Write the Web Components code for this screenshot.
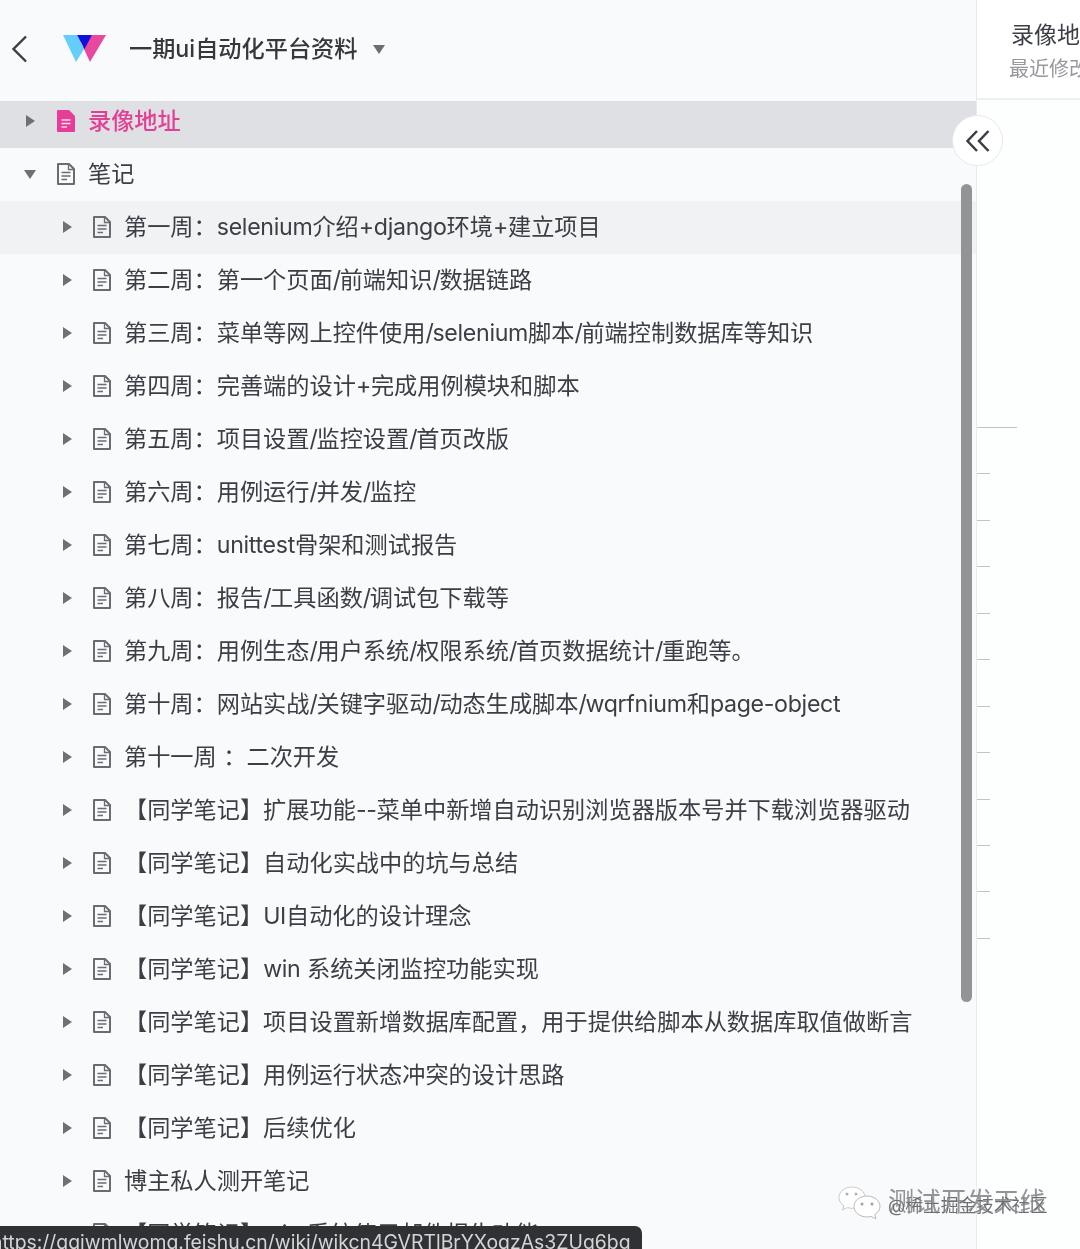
<!DOCTYPE html>
<html lang="zh-CN"><head><meta charset="utf-8"><title>一期ui自动化平台资料</title>
<style>
html,body{margin:0;padding:0;height:1249px;overflow:hidden;background:#fdfefe}
body{font-family:Inter,"Noto Sans CJK SC","Liberation Sans",sans-serif;color:#3b3e44}
</style></head><body>
<wiki-app>
  <wiki-sidebar slot="side">
    <wiki-header>一期ui自动化平台资料</wiki-header>
    <tree-row level="1" state="active" arrow="right">录像地址</tree-row>
    <tree-row level="1" arrow="down">笔记</tree-row>
    <tree-row level="2" state="hover">第一周：selenium介绍+django环境+建立项目</tree-row>
    <tree-row level="2">第二周：第一个页面/前端知识/数据链路</tree-row>
    <tree-row level="2">第三周：菜单等网上控件使用/selenium脚本/前端控制数据库等知识</tree-row>
    <tree-row level="2">第四周：完善端的设计+完成用例模块和脚本</tree-row>
    <tree-row level="2">第五周：项目设置/监控设置/首页改版</tree-row>
    <tree-row level="2">第六周：用例运行/并发/监控</tree-row>
    <tree-row level="2">第七周：unittest骨架和测试报告</tree-row>
    <tree-row level="2">第八周：报告/工具函数/调试包下载等</tree-row>
    <tree-row level="2">第九周：用例生态/用户系统/权限系统/首页数据统计/重跑等。</tree-row>
    <tree-row level="2">第十周：网站实战/关键字驱动/动态生成脚本/wqrfnium和page-object</tree-row>
    <tree-row level="2">第十一周 ：二次开发</tree-row>
    <tree-row level="2">【同学笔记】扩展功能--菜单中新增自动识别浏览器版本号并下载浏览器驱动</tree-row>
    <tree-row level="2">【同学笔记】自动化实战中的坑与总结</tree-row>
    <tree-row level="2">【同学笔记】UI自动化的设计理念</tree-row>
    <tree-row level="2">【同学笔记】win 系统关闭监控功能实现</tree-row>
    <tree-row level="2">【同学笔记】项目设置新增数据库配置，用于提供给脚本从数据库取值做断言</tree-row>
    <tree-row level="2">【同学笔记】用例运行状态冲突的设计思路</tree-row>
    <tree-row level="2">【同学笔记】后续优化</tree-row>
    <tree-row level="2">博主私人测开笔记</tree-row>
    <tree-row level="2">【同学笔记】win 系统使用邮件报告功能</tree-row>
  </wiki-sidebar>
  <wiki-aside slot="main"></wiki-aside>
</wiki-app>
<status-tip>https://qqiwmlwomq.feishu.cn/wiki/wikcn4GVRTlBrYXoqzAs3ZUg6bg</status-tip>
<wx-mark></wx-mark>
<toggle-knob></toggle-knob>
<script>
function def(name, css, html, init){
  customElements.define(name, class extends HTMLElement{
    constructor(){super();const s=this.attachShadow({mode:'open'});s.innerHTML='<style>'+css+'</style>'+(typeof html==='function'?html(this):html);if(init)init(this);}
  });
}
def('wiki-app',`:host{display:flex;width:1080px;height:1249px;overflow:hidden;position:relative;filter:blur(.3px)}`,`<slot name="side"></slot><slot name="main"></slot>`);
def('wiki-sidebar',`:host{display:block;box-sizing:border-box;width:977px;flex:none;height:1249px;background:#f9fafc;border-right:1px solid #e9eaec;position:relative;overflow:hidden}
.bar{position:absolute;left:961px;top:184px;width:11px;height:818px;border-radius:6px;background:#939497}`,`<slot></slot><div class="bar"></div>`);
def('wiki-header',`:host{display:flex;align-items:center;height:101px;box-sizing:border-box;padding:0 0 4px 11px;font-size:23.200px;font-weight:500;color:#35383d}
.back{flex:none;width:17px;height:28px;margin-right:35px}
.logo{flex:none;width:43px;height:27px;margin-right:23px;margin-top:-1px}
.caret{width:0;height:0;border-left:6.5px solid transparent;border-right:6.5px solid transparent;border-top:9px solid #6c6e72;margin-left:16px;margin-top:2px}
span{white-space:nowrap;margin-bottom:4px}`,
`<svg class="back" viewBox="0 0 17 28"><path d="M15 1.5 2.5 14 15 26.500" fill="none" stroke="#3b3e44" stroke-width="2.400"/></svg>
<svg class="logo" viewBox="0 0 43 27"><path d="M0 0H14L21 14 13 27Z" fill="#63cdfb"/><path d="M29 0H43L27 27 20 12Z" fill="#e8489e"/><path d="M14 0H29L21.500 14Z" fill="#1010dc"/></svg>
<span><slot></slot></span><i class="caret"></i>`);
const docIcon=`<svg class="doc" viewBox="0 0 18 22"><path d="M1 1H12L17 6V21H1Z" fill="none" stroke="#696c71" stroke-width="2" stroke-linejoin="round"/><path d="M11.500 1V6.500H17" fill="none" stroke="#696c71" stroke-width="1.300"/><path d="M4.500 9.500H13.500M4.500 13H13.500M4.500 16.500H10" stroke="#696c71" stroke-width="1.700"/></svg>`;
const docFill=`<svg class="doc" viewBox="0 0 18 22"><path d="M1 0H12L18 6V21A1 1 0 0 1 17 22H1A1 1 0 0 1 0 21V1A1 1 0 0 1 1 0Z" fill="#e63e98"/><path d="M4.500 10H13.500M4.500 13.500H13.500M4.500 17H10" stroke="#fbd9ea" stroke-width="1.600"/></svg>`;
def('tree-row',`:host{display:flex;align-items:center;height:53px;box-sizing:border-box;white-space:nowrap;font-size:23.200px}
:host([level="1"]){padding-left:26px}
:host([level="2"]){padding-left:63px}
:host([state="active"]){height:47px;padding-bottom:7px;background:#dfe0e4;color:#e43f97;font-weight:500}
:host([state="hover"]){background:#f1f2f4}
.tri{flex:none;width:0;height:0;margin:0 21px 1px 0;border-top:6.500px solid transparent;border-bottom:6.500px solid transparent;border-left:9px solid #6d7075}
:host([level="1"]) .tri{margin-right:22px}
:host([level="1"]) .tri.down{margin:0 21px 1px -2px;border-left:6px solid transparent;border-right:6px solid transparent;border-top:9px solid #6d7075;border-bottom:0}
.doc{flex:none;width:18px;height:22px;margin:0 13px 1px 0}
span{margin-bottom:5px}`,
h=>{const a=h.getAttribute('arrow');return `<i class="tri ${a==='down'?'down':''}"></i>${h.getAttribute('state')==='active'?docFill:docIcon}<span><slot></slot></span>`},
h=>{const t=h.firstChild;if(!t||t.nodeType!==3)return;
  const frag=document.createDocumentFragment();
  t.data.split(/([\/]|[A-Za-z+\-]+)/).forEach(p=>{if(!p)return;
    if(/^[\/A-Za-z+\-]/.test(p)){const e=document.createElement('span');e.textContent=p;e.style.letterSpacing=p==='/'?'-1.4px':'-.32px';frag.appendChild(e);}
    else frag.appendChild(document.createTextNode(p));});
  h.replaceChild(frag,t);});
def('wiki-aside',`:host{display:block;flex:1;min-width:0;height:1249px;background:#fdfefe;overflow:hidden}
.head{height:100px;box-sizing:border-box;border-bottom:2px solid #eeeff0;padding:20px 0 0 34px;white-space:nowrap;background:#fff}
.t{font-size:23px;line-height:30px;color:#3b3e44}
.s{font-size:20px;line-height:28px;margin:5px 0 0 -2px;color:#96989c}
.toc{display:grid;grid-auto-rows:46.450px;padding-top:327px}
.toc i{display:block;width:13px;height:1px;background:#c2c3c5}
.toc i.l{width:40px}`,
`<div class="head"><div class="t">录像地址</div><div class="s">最近修改</div></div><div class="toc"><i class="l"></i><i></i><i></i><i></i><i></i><i></i><i></i><i></i><i></i><i></i><i></i><i></i></div>`);
def('status-tip',`:host{position:absolute;left:0;top:1226px;width:642px;height:23px;box-sizing:border-box;background:#2f3134;border-radius:0 7px 0 0;overflow:hidden;color:#d3d4d6;font:19.400px/23px Inter,"Liberation Sans",sans-serif;white-space:nowrap;filter:blur(.3px)}
div{margin-left:-9px;margin-top:5px}`,`<div><slot></slot></div>`);
def('wx-mark',`:host{position:absolute;left:836px;top:1184px;width:240px;height:44px;filter:blur(.3px)}
svg{position:absolute;left:2px;top:2px;width:44px;height:36px}
.a,.b{position:absolute;white-space:nowrap;left:52px}
.a{top:2px;font-size:26.300px;line-height:32px;color:rgba(110,112,116,.75);text-shadow:0 0 1px #fff}
.b{top:8px;font-size:17.800px;line-height:28px;color:rgba(85,87,92,.85);text-shadow:0 0 1px #fff}`,
`<svg viewBox="0 0 44 36"><path d="M14 1C7 1 1 5.500 1 11.500 1 15 3 18 6 20L4.500 24 9.500 21.500C11 22 12.500 22.300 14 22.300 21 22 27 17.500 27 11.500 27 5.500 21 1 14 1Z" fill="#fff" stroke="#c8c9cb"/><path d="M29 10C22 10 16 14.500 16 20.500S22 31 29 31C30.500 31 32 30.700 33 30.300L38 33 36.800 28.500C40 26.500 42 23.700 42 20.500 42 14.500 36 10 29 10Z" fill="#fff" stroke="#b8b9bb"/><circle cx="9" cy="8" r="1.500" fill="#b0b1b3"/><circle cx="18" cy="8" r="1.500" fill="#b0b1b3"/><circle cx="24" cy="18" r="1.500" fill="#a0a1a3"/><circle cx="34" cy="18" r="1.500" fill="#a0a1a3"/></svg>
<span class="a">测试开发天线</span><span class="b">@稀土掘金技术社区</span>`);
def('toggle-knob',`:host{position:absolute;left:952px;top:115px;width:51px;height:51px;box-sizing:border-box;border-radius:50%;background:#fff;border:1px solid #e6e7e9;display:flex;align-items:center;justify-content:center;filter:blur(.3px)}svg{width:24px;height:22px}`,`<svg viewBox="0 0 24 22"><path d="M11 1 1.500 11 11 21M22.500 1 13 11 22.500 21" fill="none" stroke="#3b3e44" stroke-width="2.500"/></svg>`);
</script>
</body></html>
